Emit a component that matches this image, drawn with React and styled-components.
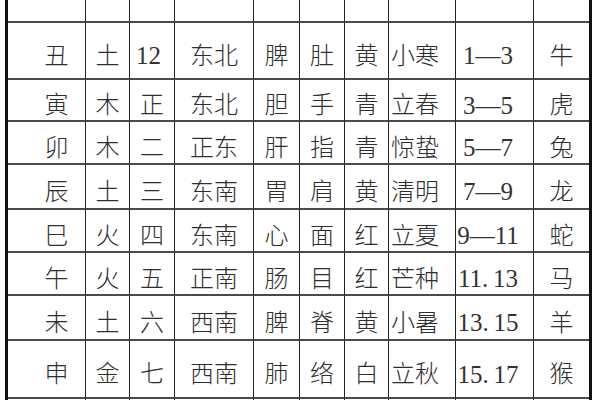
import React from "react";
import styled, { createGlobalStyle } from "styled-components";

const Global = createGlobalStyle`
  html, body { margin: 0; padding: 0; background: #ffffff; overflow: hidden; }
  #root { width: 600px; height: 400px; overflow: hidden; }
`;

const COLS = [78, 44, 45, 79, 46, 45, 44, 67, 78, 55];
const ROWS = [57, 57, 42, 43, 45, 43, 43, 45, 58, 50];

const Sheet = styled.div`
  display: grid;
  grid-template-columns: ${COLS.map((c) => c + "px").join(" ")};
  grid-template-rows: ${ROWS.map((r) => r + "px").join(" ")};
  width: ${COLS.reduce((a, b) => a + b, 0) + 6}px;
  box-sizing: border-box;
  margin: -34px 0 0 5px;
  border-left: 3px solid #111;
  border-right: 3px solid #111;
  font-family: "Liberation Serif", "Noto Sans CJK SC", serif;
  font-size: 24px;
  font-weight: 300;
  line-height: 1;
  color: #2e2e2e;
`;

const Cell = styled.div`
  box-sizing: border-box;
  display: flex;
  align-items: ${(p) => (p.$head ? "flex-end" : "center")};
  justify-content: ${(p) => (p.$align === "start" ? "flex-start" : "center")};
  padding-top: ${(p) => (p.$head ? 0 : 10)}px;
  padding-bottom: ${(p) => (p.$head ? 26 : 0)}px;
  padding-left: ${(p) => p.$pl || 0}px;
  padding-right: ${(p) => p.$pr || 0}px;
  border-bottom: 2px solid #4a4a4a;
  border-right: ${(p) => (p.$last ? "none" : "1px solid #222")};
  white-space: nowrap;
`;

const Num = styled.span`
  font-size: 25px;
  font-weight: 400;
  color: #333;
`;

const Dot = styled.span`
  display: inline-block;
  width: 11px;
`;

const header = ["支", "行", "月", "方位", "脏", "腑", "色", "节气", "", "肖"];

const data = [
  ["丑", "土", "12", "东北", "脾", "肚", "黄", "小寒", "1—3", "牛"],
  ["寅", "木", "正", "东北", "胆", "手", "青", "立春", "3—5", "虎"],
  ["卯", "木", "二", "正东", "肝", "指", "青", "惊蛰", "5—7", "兔"],
  ["辰", "土", "三", "东南", "胃", "肩", "黄", "清明", "7—9", "龙"],
  ["巳", "火", "四", "东南", "心", "面", "红", "立夏", "9—11", "蛇"],
  ["午", "火", "五", "正南", "肠", "目", "红", "芒种", "11.13", "马"],
  ["未", "土", "六", "西南", "脾", "脊", "黄", "小暑", "13.15", "羊"],
  ["申", "金", "七", "西南", "肺", "络", "白", "立秋", "15.17", "猴"],
  ["酉", "金", "八", "正西", "肺", "背", "白", "白露", "17.19", "鸡"],
];

function cellProps(ci, text) {
  const p = { $last: ci === COLS.length - 1 };
  if (ci === 0) p.$pl = 20;
  if (ci === 2 && /\d/.test(text)) {
    p.$align = "start";
    p.$pl = 6;
  }
  if (ci === 7) {
    p.$align = "start";
    p.$pl = 2;
  }
  if (ci === 8) p.$pr = 13;
  return p;
}

function renderText(text) {
  if (!/\d/.test(text)) return text;
  if (text.includes(".")) {
    const [a, b] = text.split(".");
    return (
      <Num>
        {a}
        <Dot>.</Dot>
        {b}
      </Num>
    );
  }
  return <Num>{text}</Num>;
}

export default function App() {
  return (
    <>
      <Global />
      <Sheet>
        {header.map((h, ci) => (
          <Cell key={"h" + ci} $head {...cellProps(ci, h)}>
            {h}
          </Cell>
        ))}
        {data.map((row, ri) =>
          row.map((t, ci) => (
            <Cell key={ri + "-" + ci} {...cellProps(ci, t)}>
              {renderText(t)}
            </Cell>
          ))
        )}
      </Sheet>
    </>
  );
}
